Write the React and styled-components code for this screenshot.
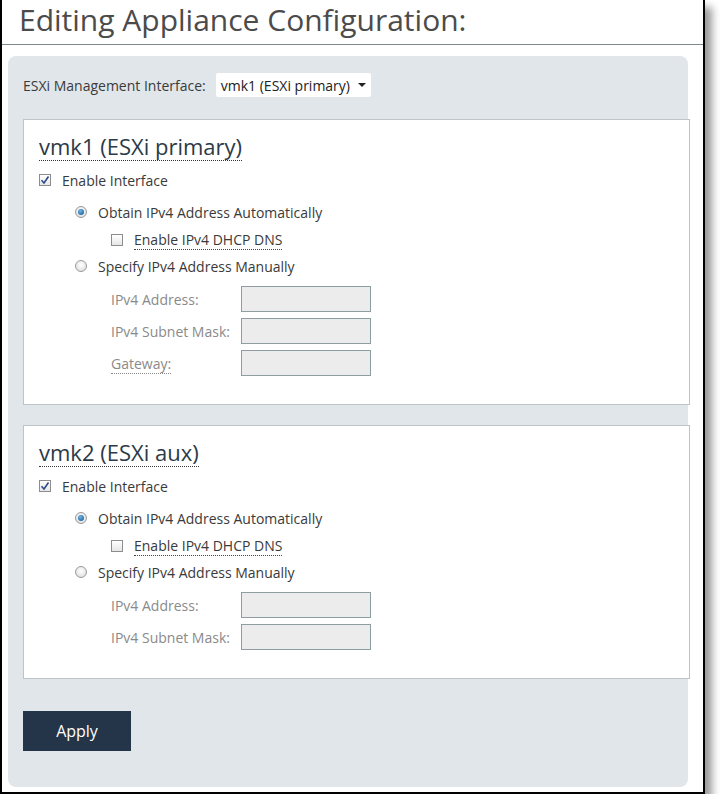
import React from "react";
import styled, { createGlobalStyle } from "styled-components";

const GlobalStyle = createGlobalStyle`
  html, body {
    margin: 0;
    padding: 0;
    background: #ffffff;
  }
  body {
    font-family: "Open Sans", "Liberation Sans", sans-serif;
    color: #333;
  }
`;

const Frame = styled.div`
  width: 701px;
  height: 792px;
  border: 2px solid #000;
  border-top: none;
  background: #fff;
  box-shadow: 7px 7px 8px rgba(0, 0, 0, 0.4);
  display: flex;
  flex-direction: column;
`;

const Title = styled.h1`
  margin: 0;
  padding: 0 0 4px 17px;
  font-size: 30px;
  line-height: 40px;
  font-weight: 400;
  color: #4b4b4b;
  border-bottom: 1px solid #7c8a8c;
`;

const Panel = styled.div`
  margin: 11px 0 5px 6px;
  width: 665px;
  flex: 1;
  padding: 17px 0 0 15px;
  background: #e1e6ea;
  border-radius: 8px;
  display: flex;
  flex-direction: column;
`;

const TopRow = styled.div`
  display: flex;
  align-items: center;
  gap: 10px;
  font-size: 14px;
  color: #3a3a3a;
`;

const Select = styled.div`
  width: 155px;
  height: 24px;
  box-sizing: border-box;
  background: #fff;
  border-radius: 2px;
  display: flex;
  align-items: center;
  justify-content: space-between;
  padding: 0 5px 0 5px;
  font-size: 14px;
  color: #222;
`;

const Caret = styled.span`
  width: 0;
  height: 0;
  border-left: 4px solid transparent;
  border-right: 4px solid transparent;
  border-top: 4px solid #222;
`;

const Card = styled.section`
  margin: ${(p) => p.$top}px -2px 0 0;
  background: #fff;
  border: 1px solid #bcc4c8;
  padding: 13px 0 ${(p) => p.$bottom}px 15px;
  display: flex;
  flex-direction: column;
  align-items: flex-start;
`;

const Heading = styled.h2`
  margin: 0;
  font-size: 22px;
  line-height: 27px;
  font-weight: 400;
  color: #2c3a47;
  border-bottom: 1px dotted #333;
`;

const Row = styled.div`
  display: flex;
  align-items: center;
  height: 20px;
  margin: ${(p) => p.$top}px 0 0 ${(p) => p.$indent}px;
  gap: 11px;
  font-size: 14px;
  color: #3a3a3a;
`;

const Box = styled.span`
  width: 12px;
  height: 12px;
  box-sizing: border-box;
  border: 1px solid #8d8d8d;
  background: linear-gradient(#ffffff, #e6e6e6);
  display: flex;
  align-items: center;
  justify-content: center;
`;

const Radio = styled.span`
  width: 12px;
  height: 12px;
  box-sizing: border-box;
  border-radius: 50%;
  border: 1px solid #9a9a9a;
  background: radial-gradient(circle at 50% 40%, #ffffff, #d8d8d8);
  display: flex;
  align-items: center;
  justify-content: center;
  &::after {
    content: "";
    display: ${(p) => (p.$checked ? "block" : "none")};
    width: 6px;
    height: 6px;
    border-radius: 50%;
    background: radial-gradient(circle at 40% 35%, #6fb6e8, #0b4f8a);
  }
`;

const Dotted = styled.span`
  border-bottom: 1px dotted #444;
  line-height: 19px;
`;

const Field = styled.div`
  display: flex;
  align-items: center;
  margin: ${(p) => p.$top}px 0 0 72px;
  height: 26px;
  font-size: 14px;
  color: #8a8a8a;
`;

const FieldLabel = styled.span`
  width: 130px;
  & > span {
    border-bottom: ${(p) => (p.$dotted ? "1px dotted #888" : "none")};
  }
`;

const Input = styled.div`
  width: 130px;
  height: 26px;
  box-sizing: border-box;
  background: #ececec;
  border: 1px solid #8e9e9e;
`;

const ApplyButton = styled.button`
  margin-top: 32px;
  width: 108px;
  height: 40px;
  border: none;
  background: #253549;
  color: #fff;
  font-family: "Open Sans", "Liberation Sans", sans-serif;
  font-size: 16px;
  padding: 0;
  cursor: pointer;
`;

const Check = () => (
  <svg width="10" height="10" viewBox="0 0 10 10">
    <path d="M1.5 5.2 L4 8 L8.5 1.5" fill="none" stroke="#2a4a8c" strokeWidth="1.6" />
  </svg>
);

const InterfaceCard = ({ title, top, showGateway }) => (
  <Card $top={top} $bottom={28}>
    <Heading>{title}</Heading>
    <Row $top={9} $indent={0}>
      <Box>
        <Check />
      </Box>
      Enable Interface
    </Row>
    <Row $top={12} $indent={36}>
      <Radio $checked />
      Obtain IPv4 Address Automatically
    </Row>
    <Row $top={8} $indent={72}>
      <Box />
      <Dotted>Enable IPv4 DHCP DNS</Dotted>
    </Row>
    <Row $top={6} $indent={36}>
      <Radio />
      Specify IPv4 Address Manually
    </Row>
    <Field $top={10}>
      <FieldLabel>
        <span>IPv4 Address:</span>
      </FieldLabel>
      <Input />
    </Field>
    <Field $top={6}>
      <FieldLabel>
        <span>IPv4 Subnet Mask:</span>
      </FieldLabel>
      <Input />
    </Field>
    {showGateway && (
      <Field $top={6}>
        <FieldLabel $dotted>
          <span>Gateway:</span>
        </FieldLabel>
        <Input />
      </Field>
    )}
  </Card>
);

const App = () => {
  return (
    <>
      <GlobalStyle />
      <Frame>
        <Title>Editing Appliance Configuration:</Title>
        <Panel>
          <TopRow>
            ESXi Management Interface:
            <Select>
              vmk1 (ESXi primary)
              <Caret />
            </Select>
          </TopRow>
          <InterfaceCard title="vmk1 (ESXi primary)" top={22} showGateway />
          <InterfaceCard title="vmk2 (ESXi aux)" top={20} />
          <div>
            <ApplyButton>Apply</ApplyButton>
          </div>
        </Panel>
      </Frame>
    </>
  );
};

export default App;
